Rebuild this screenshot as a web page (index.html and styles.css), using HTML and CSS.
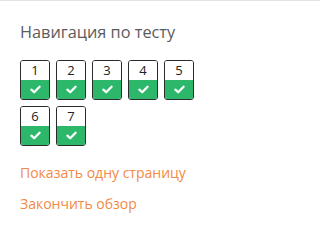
FILE: index.html
```html
<!DOCTYPE html>
<html lang="ru">
<head>
<meta charset="utf-8">
<link rel="stylesheet" href="styles.css">
</head>
<body>
<div class="panel">
  <h3 class="title">Навигация по тесту</h3>
  <div class="grid">
    <a class="q"><span class="num">1</span><span class="state"><svg viewBox="0 0 10 8" class="chk"><path d="M1.3 4.2 L3.8 6.5 L8.7 1.5" /></svg></span></a>
    <a class="q"><span class="num">2</span><span class="state"><svg viewBox="0 0 10 8" class="chk"><path d="M1.3 4.2 L3.8 6.5 L8.7 1.5" /></svg></span></a>
    <a class="q"><span class="num">3</span><span class="state"><svg viewBox="0 0 10 8" class="chk"><path d="M1.3 4.2 L3.8 6.5 L8.7 1.5" /></svg></span></a>
    <a class="q"><span class="num">4</span><span class="state"><svg viewBox="0 0 10 8" class="chk"><path d="M1.3 4.2 L3.8 6.5 L8.7 1.5" /></svg></span></a>
    <a class="q"><span class="num">5</span><span class="state"><svg viewBox="0 0 10 8" class="chk"><path d="M1.3 4.2 L3.8 6.5 L8.7 1.5" /></svg></span></a>
    <a class="q"><span class="num">6</span><span class="state"><svg viewBox="0 0 10 8" class="chk"><path d="M1.3 4.2 L3.8 6.5 L8.7 1.5" /></svg></span></a>
    <a class="q"><span class="num">7</span><span class="state"><svg viewBox="0 0 10 8" class="chk"><path d="M1.3 4.2 L3.8 6.5 L8.7 1.5" /></svg></span></a>
  </div>
  <div class="links">
    <a class="link" href="#">Показать одну страницу</a>
    <a class="link" href="#">Закончить обзор</a>
  </div>
</div>
</body>
</html>
```

FILE: styles.css
```css
html, body {
  margin: 0;
  padding: 0;
  background: #ffffff;
}
body {
  font-family: "Open Sans", "Noto Sans", sans-serif;
  border-top: 1px solid #e4e4e4;
  height: 237px;
}
.panel {
  padding: 22px 0 0 20px;
}
.title {
  margin: 0;
  font-size: 16.3px;
  line-height: 19.2px;
  font-weight: 400;
  color: #5b5b5b;
}
.grid {
  margin-top: 18px;
  width: 180px;
  display: flex;
  flex-wrap: wrap;
  gap: 6px 6px;
}
.q {
  box-sizing: border-box;
  width: 30px;
  height: 40px;
  border: 1px solid #2b2b2b;
  border-radius: 3px;
  overflow: hidden;
  display: flex;
  flex-direction: column;
}
.num {
  height: 19px;
  line-height: 19px;
  font-size: 13px;
  text-align: center;
  color: #222;
  background: #fff;
}
.state {
  height: 19px;
  background: #2db76a;
  display: flex;
  align-items: center;
  justify-content: center;
}
.chk {
  width: 11px;
  height: 9px;
}
.chk path {
  fill: none;
  stroke: #fff;
  stroke-width: 2.1;
  stroke-linecap: round;
  stroke-linejoin: round;
}
.links {
  margin-top: 16px;
  display: flex;
  flex-direction: column;
  gap: 10px;
}
.link {
  font-size: 14px;
  line-height: 21px;
  color: #f28a45;
  text-decoration: none;
}
```
